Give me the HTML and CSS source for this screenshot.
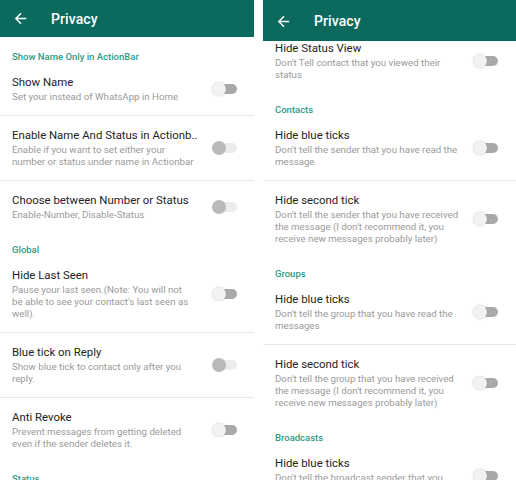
FILE: index.html
```html
<!DOCTYPE html>
<html>
<head>
<meta charset="utf-8">
<link rel="stylesheet" href="styles.css">
</head>
<body>
<div class="screen">
  <section class="panel panel-left">
    <header class="bar bar-left">
      <svg class="back" viewBox="0 0 24 24" width="17" height="17"><path fill="#fff" d="M20 11H7.83l5.59-5.59L12 4l-8 8 8 8 1.41-1.41L7.83 13H20v-2z"/></svg>
      <span class="bar-title">Privacy</span>
    </header>
    <div class="list">
      <div class="section first">Show Name Only in ActionBar</div>
      <div class="row divided">
        <div class="text"><div class="title">Show Name</div><div class="sub">Set your instead of WhatsApp in Home</div></div>
        <div class="switch"></div>
      </div>
      <div class="row divided">
        <div class="text"><div class="title">Enable Name And Status in Actionb..</div><div class="sub">Enable if you want to set either your<br>number or status under name in Actionbar</div></div>
        <div class="switch dim"></div>
      </div>
      <div class="row">
        <div class="text"><div class="title">Choose between Number or Status</div><div class="sub">Enable-Number, Disable-Status</div></div>
        <div class="switch dim"></div>
      </div>
      <div class="section">Global</div>
      <div class="row divided">
        <div class="text"><div class="title">Hide Last Seen</div><div class="sub">Pause your last seen.(Note: You will not<br>be able to see your contact's last seen as<br>well).</div></div>
        <div class="switch"></div>
      </div>
      <div class="row divided">
        <div class="text"><div class="title">Blue tick on Reply</div><div class="sub">Show blue tick to contact only after you<br>reply.</div></div>
        <div class="switch dim"></div>
      </div>
      <div class="row">
        <div class="text"><div class="title">Anti Revoke</div><div class="sub">Prevent messages from getting deleted<br>even if the sender deletes it.</div></div>
        <div class="switch"></div>
      </div>
      <div class="section">Status</div>
    </div>
  </section>
  <section class="panel panel-right">
    <header class="bar bar-right">
      <svg class="back" viewBox="0 0 24 24" width="17" height="17"><path fill="#fff" d="M20 11H7.83l5.59-5.59L12 4l-8 8 8 8 1.41-1.41L7.83 13H20v-2z"/></svg>
      <span class="bar-title">Privacy</span>
    </header>
    <div class="list">
      <div class="row scrolled">
        <div class="text"><div class="title">Hide Status View</div><div class="sub">Don't Tell contact that you viewed their<br>status</div></div>
        <div class="switch"></div>
      </div>
      <div class="section">Contacts</div>
      <div class="row divided">
        <div class="text"><div class="title">Hide blue ticks</div><div class="sub">Don't tell the sender that you have read the<br>message</div></div>
        <div class="switch"></div>
      </div>
      <div class="row">
        <div class="text"><div class="title">Hide second tick</div><div class="sub">Don't tell the sender that you have received<br>the message (I don't recommend it, you<br>receive new messages probably later)</div></div>
        <div class="switch"></div>
      </div>
      <div class="section">Groups</div>
      <div class="row divided">
        <div class="text"><div class="title">Hide blue ticks</div><div class="sub">Don't tell the group that you have read the<br>messages</div></div>
        <div class="switch"></div>
      </div>
      <div class="row">
        <div class="text"><div class="title">Hide second tick</div><div class="sub">Don't tell the group that you have received<br>the message (I don't recommend it, you<br>receive new messages probably later)</div></div>
        <div class="switch"></div>
      </div>
      <div class="section">Broadcasts</div>
      <div class="row">
        <div class="text"><div class="title">Hide blue ticks</div><div class="sub">Don't tell the broadcast sender that you<br>have read the message</div></div>
        <div class="switch"></div>
      </div>
    </div>
  </section>
</div>
</body>
</html>
```
FILE: styles.css
```css
html, body {
  margin: 0;
  padding: 0;
  background: #fff;
}
body {
  font-family: Roboto, "Noto Sans", "Liberation Sans", sans-serif;
  width: 516px;
  height: 480px;
  overflow: hidden;
}
.screen {
  display: flex;
  gap: 9px;
  height: 480px;
}
.panel {
  display: flex;
  flex-direction: column;
  overflow: hidden;
  background: #fff;
}
.panel-left { width: 254px; }
.panel-right { flex: 1; }
.bar {
  flex: none;
  display: flex;
  align-items: center;
  gap: 22px;
  padding-left: 12px;
  background: #0b6a5d;
  position: relative;
  z-index: 1;
}
.bar-left { height: 37px; }
.bar-right { height: 41px; padding-top: 1px; box-sizing: border-box; }
.back { flex: none; display: block; }
.bar-title {
  color: #fff;
  font-size: 14px;
  font-weight: 500;
  letter-spacing: 0.1px;
}
.list {
  flex: 1;
  display: flex;
  flex-direction: column;
}
.section {
  padding: 11px 12px 0;
  line-height: 12px;
  font-size: 9.5px;
  font-weight: 500;
  color: #2f9a88;
}
.section.first { padding-top: 14px; }
.row {
  display: flex;
  align-items: center;
  padding: 11px 17px 12px 12px;
}
.panel-right .row { padding-right: 18px; }
.row.divided { border-bottom: 1px solid #e8e8e8; }
.row.scrolled { margin-top: -12px; }
.text { flex: 1; min-width: 0; }
.title {
  font-size: 11.4px;
  line-height: 17px;
  color: #232323;
  white-space: nowrap;
}
.sub {
  font-size: 9.7px;
  line-height: 12px;
  color: #9a9a9a;
  white-space: nowrap;
}
.switch {
  flex: none;
  position: relative;
  width: 24px;
  height: 10px;
  border-radius: 5px;
  background: #a9a9a9;
  margin-left: 8px;
}
.switch::before {
  content: "";
  position: absolute;
  left: -1px;
  top: -2px;
  width: 14px;
  height: 14px;
  border-radius: 50%;
  background: #f2f2f2;
  box-shadow: 0 0 1.5px rgba(0,0,0,0.25);
}
.switch.dim { background: #ececec; }
.switch.dim::before { background: #b9b9b9; box-shadow: none; }
```
